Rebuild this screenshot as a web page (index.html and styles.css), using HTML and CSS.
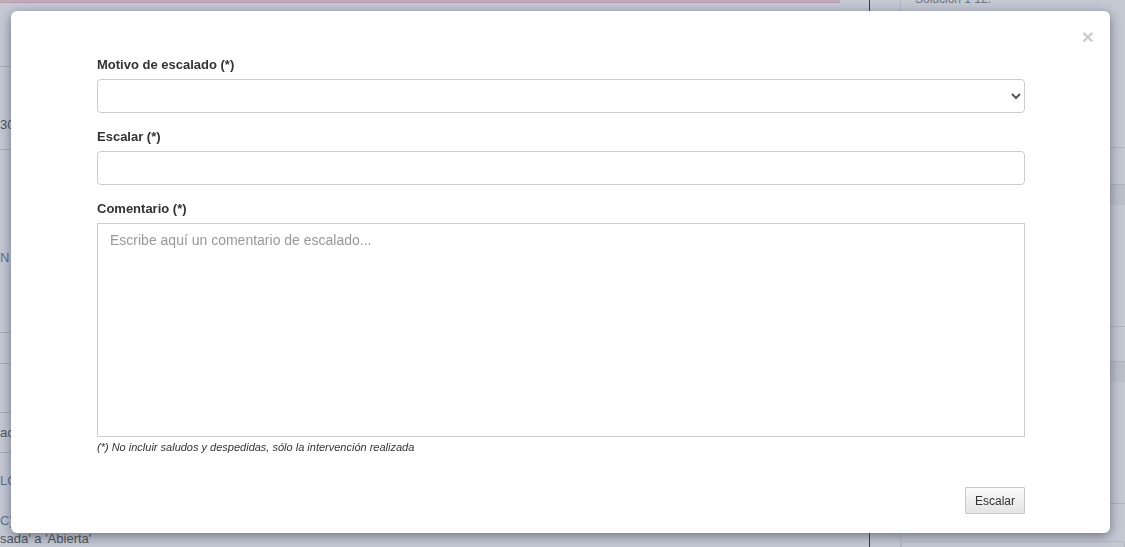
FILE: index.html
```html
<!DOCTYPE html>
<html>
<head>
  <title>Escalar incidencia</title>
  <link rel="stylesheet" href="styles.css">
</head>
<body>
  <div class="page">
    <div class="main">
      <div class="top-bar"></div>
      <div class="row row-a"></div>
      <div class="row row-b"><span class="muted">30</span></div>
      <div class="row row-c"><span class="link">N E</span></div>
      <div class="row row-d"></div>
      <div class="row row-e"></div>
      <div class="row row-f"><span class="muted">ac</span></div>
      <div class="tail">
        <span class="link">LO</span>
        <p class="history"><span class="link">C)</span><br><span class="muted">sada' a 'Abierta'</span></p>
      </div>
    </div>
    <div class="side">
      <div class="side-col">
        <div class="side-head">Solución 1 12.</div>
        <div class="side-row s1"></div>
        <div class="side-row s2"></div>
        <div class="side-band"></div>
        <div class="side-row s3"></div>
        <div class="side-row s4"></div>
        <div class="side-band"></div>
        <div class="side-row s5"></div>
        <div class="side-box"></div>
      </div>
    </div>
  </div>

  <div class="modal">
    <span class="close">&times;</span>
    <form class="modal-body">
      <div class="form-group">
        <label for="motivo">Motivo de escalado (*)</label>
        <select id="motivo" class="form-control">
          <option value=""></option>
        </select>
      </div>
      <div class="form-group">
        <label for="escalar">Escalar (*)</label>
        <input type="text" id="escalar" class="form-control">
      </div>
      <div class="form-group last">
        <label for="comentario">Comentario (*)</label>
        <textarea id="comentario" class="form-control" placeholder="Escribe aquí un comentario de escalado..."></textarea>
        <p class="help">(*) No incluir saludos y despedidas, sólo la intervención realizada</p>
      </div>
      <div class="modal-footer">
        <button type="button" class="btn">Escalar</button>
      </div>
    </form>
  </div>
</body>
</html>
```

FILE: styles.css
```css
body {
  margin: 0;
  font-family: "Liberation Sans", Arial, sans-serif;
  font-size: 14px;
  color: #333;
  background-color: #c5c9d4;
  overflow: hidden;
}

.page {
  display: flex;
  height: 547px;
}

/* page behind the overlay */
.main {
  width: 869px;
  display: flex;
  flex-direction: column;
}

.top-bar {
  flex-shrink: 0;
  height: 2px;
  width: 840px;
  background-color: #c2aab9;
  border-bottom: 1px solid #b3a0b0;
}

.row {
  flex-shrink: 0;
  box-sizing: border-box;
  border-bottom: 1px solid #a9adb8;
  display: flex;
  align-items: flex-start;
  font-size: 13px;
  line-height: 15px;
}

.row-a { height: 64px; }
.row-b { height: 83px; padding-top: 50px; }
.row-c { height: 183px; padding-top: 100px; }
.row-d { height: 31px; }
.row-e { height: 49px; }
.row-f { height: 40px; padding-top: 12px; }

.muted {
  color: #4f535c;
}

.link {
  color: #52739a;
}

.tail {
  display: flex;
  flex-direction: column;
  gap: 24px;
  padding-top: 20px;
  font-size: 13px;
  line-height: 15px;
}

.history {
  margin: 0;
  line-height: 18px;
}

.side {
  flex: 1;
  border-left: 1px solid #3b3e46;
  padding-left: 30px;
}

.side-col {
  border-left: 1px solid #b4b8c3;
  display: flex;
  flex-direction: column;
}

.side-head {
  margin-top: -8px;
  padding-left: 14px;
  font-size: 12px;
  line-height: 14px;
  color: #70747c;
}

.side-row {
  flex-shrink: 0;
  border-bottom: 1px solid #b0b4bf;
}

.side-band {
  flex-shrink: 0;
  height: 20px;
  background-color: #bcc0cb;
}

.s1 { height: 141px; }
.s2 { height: 36px; }
.s3 { height: 121px; }
.s4 { height: 34px; }
.s5 { height: 121px; }

.side-box {
  margin-top: 37px;
  height: 20px;
  border: 1px solid #b4b8c3;
  border-radius: 3px;
}

/* modal */
.modal {
  position: fixed;
  left: 11px;
  top: 11px;
  width: 1099px;
  height: 522px;
  box-sizing: border-box;
  background-color: #fff;
  border-radius: 6px;
  box-shadow: 0 3px 12px rgba(40, 45, 60, 0.55);
}

.close {
  position: absolute;
  top: 15px;
  right: 16px;
  font-size: 21px;
  font-weight: bold;
  line-height: 1;
  color: #000;
  opacity: 0.2;
}

.modal-body {
  padding: 45px 85px 0 86px;
}

.form-group {
  margin-bottom: 15px;
}

.form-group.last {
  margin-bottom: 0;
}

label {
  display: block;
  margin-bottom: 5px;
  font-size: 13px;
  font-weight: bold;
  line-height: 18px;
}

.form-control {
  display: block;
  width: 100%;
  box-sizing: border-box;
  height: 34px;
  padding: 6px 12px;
  font-family: "Liberation Sans", Arial, sans-serif;
  font-size: 14px;
  line-height: 20px;
  color: #555;
  background-color: #fff;
  border: 1px solid #ccc;
  border-radius: 4px;
  margin: 0;
}

textarea.form-control {
  height: 214px;
  border-radius: 0;
  resize: none;
}

textarea::placeholder {
  color: #999;
}

.help {
  margin: 4px 0 0;
  font-size: 11px;
  line-height: 13px;
  font-style: italic;
  color: #333;
}

.modal-footer {
  display: flex;
  justify-content: flex-end;
  padding-top: 33px;
}

.btn {
  height: 27px;
  padding: 0 9px;
  font-family: "Liberation Sans", Arial, sans-serif;
  font-size: 12px;
  color: #333;
  background: linear-gradient(#fafafa, #e4e4e4);
  border: 1px solid #c8c8c8;
  border-radius: 1px;
}
```
